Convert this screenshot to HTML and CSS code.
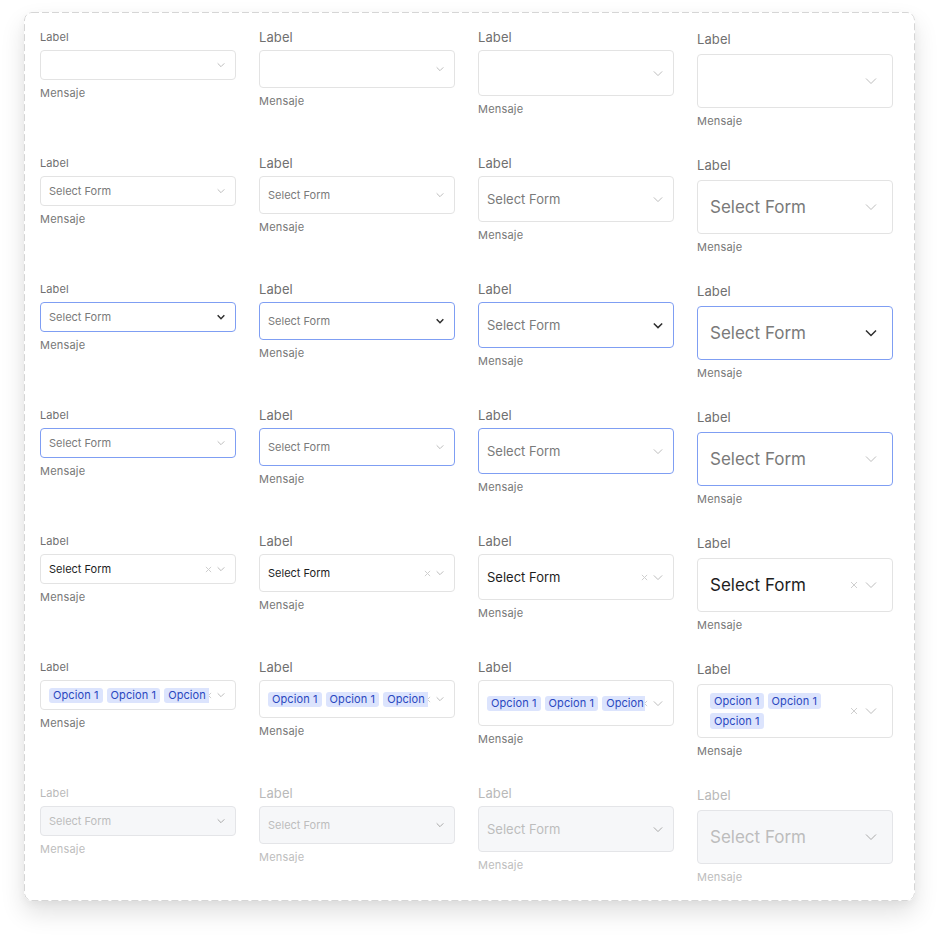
FILE: index.html
```html
<!DOCTYPE html>
<html lang="es">
<head>
<meta charset="utf-8">
<title>Select Form</title>
<link rel="stylesheet" href="styles.css">
</head>
<body>
<div class="card">
  <!-- Row 1: empty -->
  <div class="field xs"><label class="lbl">Label</label><div class="sel"><span class="val"></span><span class="icons"><svg class="chev" viewBox="0 0 12 6"><path d="M1 .5l5 5 5-5"/></svg></span></div><div class="msg">Mensaje</div></div>
  <div class="field sm"><label class="lbl">Label</label><div class="sel"><span class="val"></span><span class="icons"><svg class="chev" viewBox="0 0 12 6"><path d="M1 .5l5 5 5-5"/></svg></span></div><div class="msg">Mensaje</div></div>
  <div class="field md"><label class="lbl">Label</label><div class="sel"><span class="val"></span><span class="icons"><svg class="chev" viewBox="0 0 12 6"><path d="M1 .5l5 5 5-5"/></svg></span></div><div class="msg">Mensaje</div></div>
  <div class="field lg"><label class="lbl">Label</label><div class="sel"><span class="val"></span><span class="icons"><svg class="chev" viewBox="0 0 12 6"><path d="M1 .5l5 5 5-5"/></svg></span></div><div class="msg">Mensaje</div></div>

  <!-- Row 2: placeholder -->
  <div class="field xs"><label class="lbl">Label</label><div class="sel"><span class="val ph">Select Form</span><span class="icons"><svg class="chev" viewBox="0 0 12 6"><path d="M1 .5l5 5 5-5"/></svg></span></div><div class="msg">Mensaje</div></div>
  <div class="field sm"><label class="lbl">Label</label><div class="sel"><span class="val ph">Select Form</span><span class="icons"><svg class="chev" viewBox="0 0 12 6"><path d="M1 .5l5 5 5-5"/></svg></span></div><div class="msg">Mensaje</div></div>
  <div class="field md"><label class="lbl">Label</label><div class="sel"><span class="val ph">Select Form</span><span class="icons"><svg class="chev" viewBox="0 0 12 6"><path d="M1 .5l5 5 5-5"/></svg></span></div><div class="msg">Mensaje</div></div>
  <div class="field lg"><label class="lbl">Label</label><div class="sel"><span class="val ph">Select Form</span><span class="icons"><svg class="chev" viewBox="0 0 12 6"><path d="M1 .5l5 5 5-5"/></svg></span></div><div class="msg">Mensaje</div></div>

  <!-- Row 3: open -->
  <div class="field xs"><label class="lbl">Label</label><div class="sel is-open"><span class="val ph">Select Form</span><span class="icons"><svg class="chev" viewBox="0 0 12 6"><path d="M1 .5l5 5 5-5"/></svg></span></div><div class="msg">Mensaje</div></div>
  <div class="field sm"><label class="lbl">Label</label><div class="sel is-open"><span class="val ph">Select Form</span><span class="icons"><svg class="chev" viewBox="0 0 12 6"><path d="M1 .5l5 5 5-5"/></svg></span></div><div class="msg">Mensaje</div></div>
  <div class="field md"><label class="lbl">Label</label><div class="sel is-open"><span class="val ph">Select Form</span><span class="icons"><svg class="chev" viewBox="0 0 12 6"><path d="M1 .5l5 5 5-5"/></svg></span></div><div class="msg">Mensaje</div></div>
  <div class="field lg"><label class="lbl">Label</label><div class="sel is-open"><span class="val ph">Select Form</span><span class="icons"><svg class="chev" viewBox="0 0 12 6"><path d="M1 .5l5 5 5-5"/></svg></span></div><div class="msg">Mensaje</div></div>

  <!-- Row 4: focus -->
  <div class="field xs"><label class="lbl">Label</label><div class="sel is-focus"><span class="val ph">Select Form</span><span class="icons"><svg class="chev" viewBox="0 0 12 6"><path d="M1 .5l5 5 5-5"/></svg></span></div><div class="msg">Mensaje</div></div>
  <div class="field sm"><label class="lbl">Label</label><div class="sel is-focus"><span class="val ph">Select Form</span><span class="icons"><svg class="chev" viewBox="0 0 12 6"><path d="M1 .5l5 5 5-5"/></svg></span></div><div class="msg">Mensaje</div></div>
  <div class="field md"><label class="lbl">Label</label><div class="sel is-focus"><span class="val ph">Select Form</span><span class="icons"><svg class="chev" viewBox="0 0 12 6"><path d="M1 .5l5 5 5-5"/></svg></span></div><div class="msg">Mensaje</div></div>
  <div class="field lg"><label class="lbl">Label</label><div class="sel is-focus"><span class="val ph">Select Form</span><span class="icons"><svg class="chev" viewBox="0 0 12 6"><path d="M1 .5l5 5 5-5"/></svg></span></div><div class="msg">Mensaje</div></div>

  <!-- Row 5: selected value -->
  <div class="field xs"><label class="lbl">Label</label><div class="sel"><span class="val filled">Select Form</span><span class="icons"><svg class="clr" viewBox="0 0 8 8"><path d="M1 1l6 6M7 1l-6 6"/></svg><svg class="chev" viewBox="0 0 12 6"><path d="M1 .5l5 5 5-5"/></svg></span></div><div class="msg">Mensaje</div></div>
  <div class="field sm"><label class="lbl">Label</label><div class="sel"><span class="val filled">Select Form</span><span class="icons"><svg class="clr" viewBox="0 0 8 8"><path d="M1 1l6 6M7 1l-6 6"/></svg><svg class="chev" viewBox="0 0 12 6"><path d="M1 .5l5 5 5-5"/></svg></span></div><div class="msg">Mensaje</div></div>
  <div class="field md"><label class="lbl">Label</label><div class="sel"><span class="val filled">Select Form</span><span class="icons"><svg class="clr" viewBox="0 0 8 8"><path d="M1 1l6 6M7 1l-6 6"/></svg><svg class="chev" viewBox="0 0 12 6"><path d="M1 .5l5 5 5-5"/></svg></span></div><div class="msg">Mensaje</div></div>
  <div class="field lg"><label class="lbl">Label</label><div class="sel"><span class="val filled">Select Form</span><span class="icons"><svg class="clr" viewBox="0 0 8 8"><path d="M1 1l6 6M7 1l-6 6"/></svg><svg class="chev" viewBox="0 0 12 6"><path d="M1 .5l5 5 5-5"/></svg></span></div><div class="msg">Mensaje</div></div>

  <!-- Row 6: multi tags -->
  <div class="field xs"><label class="lbl">Label</label><div class="sel"><span class="val tags"><span class="tag">Opcion 1</span><span class="tag">Opcion 1</span><span class="tag">Opcion 1</span></span><span class="icons"><svg class="clr" viewBox="0 0 8 8"><path d="M1 1l6 6M7 1l-6 6"/></svg><svg class="chev" viewBox="0 0 12 6"><path d="M1 .5l5 5 5-5"/></svg></span></div><div class="msg">Mensaje</div></div>
  <div class="field sm"><label class="lbl">Label</label><div class="sel"><span class="val tags"><span class="tag">Opcion 1</span><span class="tag">Opcion 1</span><span class="tag">Opcion 1</span></span><span class="icons"><svg class="clr" viewBox="0 0 8 8"><path d="M1 1l6 6M7 1l-6 6"/></svg><svg class="chev" viewBox="0 0 12 6"><path d="M1 .5l5 5 5-5"/></svg></span></div><div class="msg">Mensaje</div></div>
  <div class="field md"><label class="lbl">Label</label><div class="sel"><span class="val tags"><span class="tag">Opcion 1</span><span class="tag">Opcion 1</span><span class="tag">Opcion 1</span></span><span class="icons"><svg class="clr" viewBox="0 0 8 8"><path d="M1 1l6 6M7 1l-6 6"/></svg><svg class="chev" viewBox="0 0 12 6"><path d="M1 .5l5 5 5-5"/></svg></span></div><div class="msg">Mensaje</div></div>
  <div class="field lg"><label class="lbl">Label</label><div class="sel"><span class="val tags wrap"><span class="tag">Opcion 1</span><span class="tag">Opcion 1</span><span class="tag">Opcion 1</span></span><span class="icons"><svg class="clr" viewBox="0 0 8 8"><path d="M1 1l6 6M7 1l-6 6"/></svg><svg class="chev" viewBox="0 0 12 6"><path d="M1 .5l5 5 5-5"/></svg></span></div><div class="msg">Mensaje</div></div>

  <!-- Row 7: disabled -->
  <div class="field xs is-disabled"><label class="lbl">Label</label><div class="sel"><span class="val ph">Select Form</span><span class="icons"><svg class="chev" viewBox="0 0 12 6"><path d="M1 .5l5 5 5-5"/></svg></span></div><div class="msg">Mensaje</div></div>
  <div class="field sm is-disabled"><label class="lbl">Label</label><div class="sel"><span class="val ph">Select Form</span><span class="icons"><svg class="chev" viewBox="0 0 12 6"><path d="M1 .5l5 5 5-5"/></svg></span></div><div class="msg">Mensaje</div></div>
  <div class="field md is-disabled"><label class="lbl">Label</label><div class="sel"><span class="val ph">Select Form</span><span class="icons"><svg class="chev" viewBox="0 0 12 6"><path d="M1 .5l5 5 5-5"/></svg></span></div><div class="msg">Mensaje</div></div>
  <div class="field lg is-disabled"><label class="lbl">Label</label><div class="sel"><span class="val ph">Select Form</span><span class="icons"><svg class="chev" viewBox="0 0 12 6"><path d="M1 .5l5 5 5-5"/></svg></span></div><div class="msg">Mensaje</div></div>
</div>
</body>
</html>
```

FILE: styles.css
```css
* { box-sizing: border-box; }

html, body {
  margin: 0;
  background: #ffffff;
}

body {
  font-family: Inter, "Liberation Sans", sans-serif;
  color: #333;
  padding: 12px 0 37px 24px;
  min-height: 938px;
}

.card {
  width: 891px;
  padding: 16px 22px 19px 16px;
  border-radius: 8px;
  background-color: #fff;
  background-image: url("data:image/svg+xml,%3Csvg xmlns='http://www.w3.org/2000/svg' width='891' height='889'%3E%3Crect x='.5' y='.5' width='890' height='888' rx='7.5' fill='none' stroke='%23d6d6d6' stroke-dasharray='7 3'/%3E%3C/svg%3E");
  background-repeat: no-repeat;
  box-shadow: 0 12px 24px rgba(0, 0, 0, 0.12), 0 3px 8px rgba(0, 0, 0, 0.04);
  display: grid;
  grid-template-columns: repeat(4, 196px);
  column-gap: 23px;
  grid-auto-rows: 98px;
  row-gap: 28px;
  align-items: start;
}

.field {
  display: flex;
  flex-direction: column;
}

.lbl {
  display: block;
  font-size: 13px;
  line-height: 18px;
  margin-bottom: 4px;
  color: #707070;
  letter-spacing: 0.1px;
}

.msg {
  font-size: 11px;
  line-height: 18px;
  margin-top: 4px;
  color: #777;
  letter-spacing: 0.2px;
}

.sel {
  display: flex;
  align-items: center;
  border: 1px solid #e3e3e3;
  border-radius: 4px;
  background: #fff;
  padding: 0 10px 0 8px;
  height: 30px;
}

.val {
  flex: 1;
  min-width: 0;
  white-space: nowrap;
  overflow: hidden;
  font-size: 11px;
}

.ph { color: #7a7a7a; }
.filled { color: #1e1e1e; }

.icons {
  display: flex;
  align-items: center;
  gap: 5px;
  flex: none;
}

.chev {
  width: 8px;
  height: 4px;
  overflow: visible;
  fill: none;
  stroke: #bdbdbd;
  stroke-width: 1px;
}
.chev path { vector-effect: non-scaling-stroke; }

.clr {
  width: 7px;
  height: 7px;
  overflow: visible;
  fill: none;
  stroke: #cfcfcf;
}
.clr path { vector-effect: non-scaling-stroke; }

/* open / focus */
.is-open, .is-focus { border-color: #7f9ef3; }
.is-open .chev { stroke: #2e2e2e; }
.is-open .chev path { stroke-width: 1.5px; }

/* tags */
.tags {
  display: flex;
  gap: 4px;
  position: relative;
  z-index: 1;
  margin-right: -4px;
}
.tags.wrap {
  flex-wrap: wrap;
  white-space: normal;
  margin-right: 0;
  row-gap: 4px;
}
.tag {
  flex: none;
  background: #dce4fd;
  color: #2a48c0;
  border-radius: 3px;
  font-size: 11px;
  line-height: 15px;
  padding: 0 4px;
  letter-spacing: 0.1px;
}

/* sizes */
.xs .lbl { font-size: 11px; }
.xs .sel { height: 30px; }

.sm .sel { height: 38px; }

.md .sel { height: 46px; }
.md .val { font-size: 13px; }
.md .chev { width: 10px; height: 5px; }

.lg .lbl { line-height: 22px; }
.lg .sel { height: 54px; padding: 0 15px 0 12px; }
.lg .val { font-size: 17px; }
.lg .val.tags { font-size: 11px; }
.lg .tag { line-height: 16px; }
.lg .chev { width: 12px; height: 6px; }
.lg .clr { width: 8px; height: 8px; }
.lg .icons { gap: 7px; }

/* disabled */
.is-disabled .lbl { color: #b9b9b9; }
.is-disabled .msg { color: #bdbdbd; }
.is-disabled .sel { background: #f6f7f9; border-color: #e4e5e8; }
.is-disabled .ph { color: #bdbdbd; }
.is-disabled .chev { stroke: #a9a9a9; }
```
